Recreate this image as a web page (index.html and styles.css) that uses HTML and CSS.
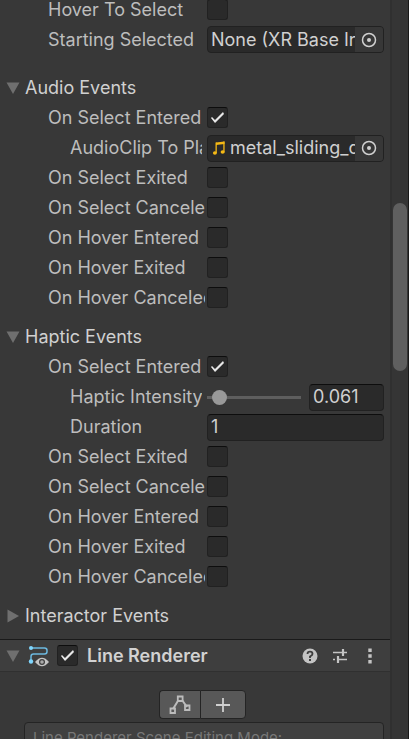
FILE: index.html
```html
<!DOCTYPE html>
<html lang="en">
<head>
<meta charset="utf-8">
<meta name="viewport" content="width=device-width, initial-scale=1">
<title>Inspector</title>
<link rel="stylesheet" href="styles.css">
</head>
<body>
<div class="inspector">
  <main class="content">
    <section class="group">
      <div class="row"><label for="hoverSel">Hover To Select</label><input class="check" type="checkbox" id="hoverSel"></div>
      <div class="row"><label for="startSel">Starting Selected</label>
        <div class="object"><span class="value">None (XR Base Interactable)</span>
          <button class="picker" id="startSel" type="button" aria-label="Choose object"><svg width="16" height="16" viewBox="0 0 16 16"><circle cx="8" cy="8" r="6.5" fill="none" stroke="currentColor" stroke-width="1.5"/><circle cx="8" cy="8" r="2" fill="currentColor"/></svg></button></div></div>
    </section>

    <section class="group spaced">
      <h2 class="foldout"><svg class="arrow" width="14" height="14" viewBox="0 0 14 14"><path d="M.5 1.5h13L7 13z" fill="currentColor"/></svg>Audio Events</h2>
      <div class="row"><label for="a1">On Select Entered</label><input class="check" type="checkbox" id="a1" checked></div>
      <div class="row nested"><label for="clip">AudioClip To Play</label>
        <div class="object"><svg class="note" width="14" height="16" viewBox="0 0 14 16"><g fill="#f5b915"><path d="M4 2.500l8.500-1v2.500l-8.500 1z"/><path d="M3.500 2.500h1.300v10.500H3.500zM11.300 1.500h1.300v11h-1.300z"/><ellipse cx="2.900" cy="13" rx="2" ry="1.700"/><ellipse cx="10.600" cy="12" rx="2" ry="1.700"/></g></svg><span class="value">metal_sliding_door</span>
          <button class="picker" id="clip" type="button" aria-label="Choose audio clip"><svg width="16" height="16" viewBox="0 0 16 16"><circle cx="8" cy="8" r="6.500" fill="none" stroke="currentColor" stroke-width="1.500"/><circle cx="8" cy="8" r="2" fill="currentColor"/></svg></button></div></div>
      <div class="row"><label for="a2">On Select Exited</label><input class="check" type="checkbox" id="a2"></div>
      <div class="row"><label for="a3">On Select Canceled</label><input class="check" type="checkbox" id="a3"></div>
      <div class="row"><label for="a4">On Hover Entered</label><input class="check" type="checkbox" id="a4"></div>
      <div class="row"><label for="a5">On Hover Exited</label><input class="check" type="checkbox" id="a5"></div>
      <div class="row"><label for="a6">On Hover Canceled</label><input class="check" type="checkbox" id="a6"></div>
    </section>

    <section class="group">
      <h2 class="foldout"><svg class="arrow" width="14" height="14" viewBox="0 0 14 14"><path d="M.5 1.5h13L7 13z" fill="currentColor"/></svg>Haptic Events</h2>
      <div class="row"><label for="h1">On Select Entered</label><input class="check" type="checkbox" id="h1" checked></div>
      <div class="row nested"><label for="intensity">Haptic Intensity</label>
        <div class="slider"><input type="range" id="intensity" min="0" max="1" step="0.001" value="0.061"><input class="text" type="text" value="0.061" aria-label="Haptic intensity value"></div></div>
      <div class="row nested"><label for="duration">Duration</label><input class="text" type="text" id="duration" value="1"></div>
      <div class="row"><label for="h2">On Select Exited</label><input class="check" type="checkbox" id="h2"></div>
      <div class="row"><label for="h3">On Select Canceled</label><input class="check" type="checkbox" id="h3"></div>
      <div class="row"><label for="h4">On Hover Entered</label><input class="check" type="checkbox" id="h4"></div>
      <div class="row"><label for="h5">On Hover Exited</label><input class="check" type="checkbox" id="h5"></div>
      <div class="row"><label for="h6">On Hover Canceled</label><input class="check" type="checkbox" id="h6"></div>
    </section>

    <section class="group last">
      <h2 class="foldout"><svg class="arrow" width="14" height="14" viewBox="0 0 14 14"><path d="M1.500 .5v13L13 7z" fill="currentColor"/></svg>Interactor Events</h2>
    </section>

    <header class="component">
      <svg class="arrow" width="14" height="14" viewBox="0 0 14 14"><path d="M.5 1.500h13L7 13z" fill="currentColor"/></svg>
      <svg class="line-icon" width="22" height="22" viewBox="0 0 22 22">
        <path d="M3 3h13.500q2.500 0 2.500 2.500v1q0 2.500-2.500 2.500h-11Q3 9 3 11.500V16" fill="none" stroke="#6cb9e0" stroke-width="1.500"/>
        <circle cx="3" cy="3" r="2" fill="#7fd6fd"/><circle cx="3" cy="16.500" r="2.200" fill="#7fd6fd"/>
        <path d="M7 17q7-8.500 14 0q-7 8.500-14 0z" fill="#c4c4c4"/><circle cx="14" cy="17" r="3" fill="#3e3e3e"/><circle cx="14" cy="17" r="1.800" fill="#aaa"/>
      </svg>
      <input class="check" type="checkbox" id="lineOn" checked>
      <label class="title" for="lineOn">Line Renderer</label>
      <button class="tool" type="button" aria-label="Help"><svg width="16" height="16" viewBox="0 0 16 16"><circle cx="8" cy="8" r="7.500" fill="#c4c4c4"/><path d="M5.500 6Q5.500 3.700 8 3.700T10.500 6Q10.500 7.200 8 8.500V10" fill="none" stroke="#3e3e3e" stroke-width="1.800"/><path d="M7 11h2v2H7z" fill="#3e3e3e"/></svg></button>
      <button class="tool" type="button" aria-label="Presets"><svg width="16" height="16" viewBox="0 0 16 16"><path d="M1 4.500h9M12 4.500h3M1 11.500h2M7 11.500h8" stroke="#c4c4c4" stroke-width="1.300"/><path d="M11 1v7M6 8v7" stroke="#c4c4c4" stroke-width="2.200"/></svg></button>
      <button class="tool" type="button" aria-label="More options"><svg width="16" height="16" viewBox="0 0 16 16"><path d="M6.300.5h3.400v3.400H6.300zM6.300 6.300h3.400v3.400H6.300zM6.300 12.100h3.400v3.400H6.300z" fill="#c4c4c4"/></svg></button>
    </header>

    <div class="modes">
      <button type="button" aria-label="Edit points"><svg width="22" height="20" viewBox="0 0 22 20"><path d="M4 14l5.500-9M13 5l5 7" stroke="#bcbcbc" stroke-width="2"/><path d="M1.500 13.500h4.500v4.500h-4.500zM8.800 1.500h4.800v4.500H8.800zM16 10.500h4.500v4.500h-4.500z" fill="none" stroke="#bcbcbc" stroke-width="1.800"/></svg></button>
      <button type="button" aria-label="Add points"><svg width="16" height="16" viewBox="0 0 16 16"><path d="M8 1v14M1 8h14" stroke="#d0d0d0" stroke-width="1.800"/></svg></button>
    </div>
    <div class="help">Line Renderer Scene Editing Mode:</div>
  </main>
  <aside class="scroll"><div class="thumb"></div></aside>
</div>
</body>
</html>
```
FILE: styles.css
```css
* { box-sizing: border-box; }

body {
  margin: 0;
  background: #383838;
  color: #bdbdbd;
  font: 18px/28px Inter, "Liberation Sans", sans-serif;
  font-optical-sizing: none;
}

button, input { font: inherit; font-optical-sizing: none; color: inherit; margin: 0; }

.inspector {
  display: grid;
  grid-template-columns: minmax(0, 1fr) 19px;
  height: 100vh;
  overflow: hidden;
}

/* The list is scrolled part of the way down a row. */
.content { margin-top: -5px; min-width: 0; }

.group { padding-bottom: 9px; }
.group.last { padding-bottom: 8px; }
.spaced { padding-top: 9px; }

.row {
  display: grid;
  grid-template-columns: 157px minmax(0, 1fr);
  column-gap: 2px;
  align-items: center;
  height: 30px;
  padding: 0 6px 1px 48px;
}
.nested {
  grid-template-columns: 132px minmax(0, 1fr);
  column-gap: 5px;
  padding-left: 70px;
  padding-bottom: 0;
}
.row label { overflow: hidden; white-space: nowrap; }

.foldout {
  display: flex;
  align-items: center;
  gap: 5px;
  height: 30px;
  margin: 0;
  padding-left: 6px;
  font-size: 18px;
  font-weight: 400;
  color: #d0d0d0;
}
.arrow { flex: none; color: #6f6f6f; }

.check {
  appearance: none;
  flex: none;
  width: 21px;
  height: 21px;
  background: #2a2a2a;
  border: 1px solid #212121;
  border-top-color: #0d0d0d;
  border-radius: 3px;
}
.check:checked::before {
  content: "";
  display: block;
  width: 19px;
  height: 19px;
  background: #e8e8e8;
  clip-path: polygon(3px 10px, 4px 9px, 7px 12px, 15px 4px, 16px 6px, 7px 15px);
}

.object, .text {
  width: 100%;
  min-width: 0;
  height: 27px;
  background: #2a2a2a;
  border: 1px solid #212121;
  border-radius: 4px;
  color: #d0d0d0;
}
.text { border-top-color: #0d0d0d; padding: 0 3px; }
.object { display: flex; align-items: center; padding-left: 3px; overflow: hidden; }
.value { flex: 1; min-width: 0; overflow: hidden; white-space: nowrap; }
.note { flex: none; margin: 0 4px 0 1px; }
.picker {
  display: flex;
  flex: none;
  align-items: center;
  justify-content: center;
  width: 28px;
  height: 25px;
  padding: 0;
  border: 0;
  background: #373737;
}

.slider {
  display: grid;
  grid-template-columns: minmax(0, 1fr) 75px;
  gap: 8px;
  align-items: center;
}
input[type="range"] {
  appearance: none;
  width: 100%;
  height: 15px;
  background: linear-gradient(#5e5e5e, #5e5e5e) center / 100% 3px no-repeat;
}
input[type="range"]::-webkit-slider-thumb {
  appearance: none;
  width: 15px;
  height: 15px;
  border-radius: 50%;
  background: #999;
}

.component {
  display: flex;
  align-items: center;
  height: 33px;
  padding: 0 12px 0 6px;
  background: #3e3e3e;
  border-top: 1px solid #1a1a1a;
  border-bottom: 1px solid #303030;
}
.line-icon { flex: none; margin: 0 7px 0 8px; }
.title { flex: 1; margin-left: 9px; font-weight: 600; color: #d2d2d2; }
.tool {
  display: flex;
  padding: 0;
  margin-left: 14px;
  border: 0;
  background: none;
}

.modes {
  display: flex;
  justify-content: center;
  margin: 18px 0 3px;
  padding-left: 15px;
}
.modes button {
  display: flex;
  align-items: center;
  justify-content: center;
  width: 46px;
  height: 29px;
  padding: 0;
  background: #585858;
  border: 1px solid #242424;
  border-radius: 0 4px 4px 0;
}
.modes button:first-child {
  width: 41px;
  border-right: 0;
  border-radius: 4px 0 0 4px;
}

.help {
  margin: 0 6px 0 24px;
  padding: 3px 8px;
  border: 1px solid #242424;
  border-radius: 4px;
  background: #404040;
  color: #777;
  font-size: 15px;
  line-height: 24px;
}

.scroll {
  padding: 203px 1px 0;
  background: #353535;
  border-left: 2px solid #303030;
  border-right: 1px solid #191919;
}
.thumb { height: 168px; border-radius: 7px; background: #5f5f5f; }
```
